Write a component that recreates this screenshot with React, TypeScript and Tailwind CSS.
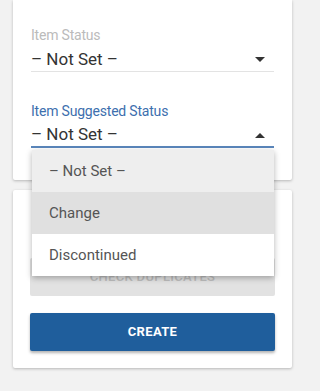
import { useState } from 'react';

const options = ['– Not Set –', 'Change', 'Discontinued'];

const Arrow = ({ up }: { up?: boolean }) => (
  <svg width="10" height="5" viewBox="0 0 10 5" className="mr-[9px]">
    {up ? <path d="M0 5 L5 0 L10 5 Z" fill="#333" /> : <path d="M0 0 L10 0 L5 5 Z" fill="#333" />}
  </svg>
);

const App = () => {
  const [hover] = useState(1);

  return (
    <div
      className="min-h-screen bg-[#f2f2f2] pl-[13px] pb-[23px]"
      style={{ fontFamily: 'Roboto, "Liberation Sans", sans-serif' }}
    >
      {/* Card with selects */}
      <div className="w-[279px] rounded-b-[2px] bg-white pl-[18px] pr-[18px] pt-[27px] pb-[32px] shadow-[0_1px_3px_rgba(0,0,0,0.25)]">
        <div>
          <div className="text-[14px] leading-[16px] tracking-[-0.2px] text-[#bbbbbb]">Item Status</div>
          <div className="mt-[5px] flex h-[24px] items-center justify-between border-b border-[#e3e3e3] text-[17px] text-[#333]">
            <span>– Not Set –</span>
            <Arrow />
          </div>
        </div>

        <div className="relative mt-[31px]">
          <div className="text-[14px] leading-[16px] tracking-[-0.2px] text-[#3d6fae]">Item Suggested Status</div>
          <div className="mt-[5px] flex h-[24px] items-center justify-between border-b-2 border-[#5a86bb] text-[17px] text-[#333]">
            <span>– Not Set –</span>
            <Arrow up />
          </div>

          {/* open menu */}
          <div className="absolute top-[47px] left-[1px] z-10 w-[242px] bg-white shadow-[0_2px_6px_rgba(0,0,0,0.3)]">
            {options.map((opt, i) => (
              <div
                key={opt}
                className={`flex h-[42px] items-center pl-[17px] text-[15px] text-[#555] ${
                  i === 0 ? 'bg-[#eeeeee]' : i === hover ? 'bg-[#e0e0e0]' : 'bg-white'
                }`}
              >
                {opt}
              </div>
            ))}
          </div>
        </div>
      </div>

      {/* Card with actions */}
      <div className="mt-[10px] w-[279px] rounded-[2px] bg-white px-[17px] pt-[68px] pb-[17px] shadow-[0_1px_3px_rgba(0,0,0,0.25)]">
        <button className="flex h-[38px] w-full items-center justify-center rounded-[2px] bg-[#e2e2e2] text-[13px] font-medium tracking-wide text-[#bdbdbd] uppercase">
          Check Duplicates
        </button>
        <button className="mt-[17px] flex h-[38px] w-full items-center justify-center rounded-[2px] bg-[#1f5e9c] text-[13px] font-bold tracking-wide text-white uppercase shadow-[0_2px_3px_rgba(0,0,0,0.3)]">
          Create
        </button>
      </div>
    </div>
  );
};

export default App;
